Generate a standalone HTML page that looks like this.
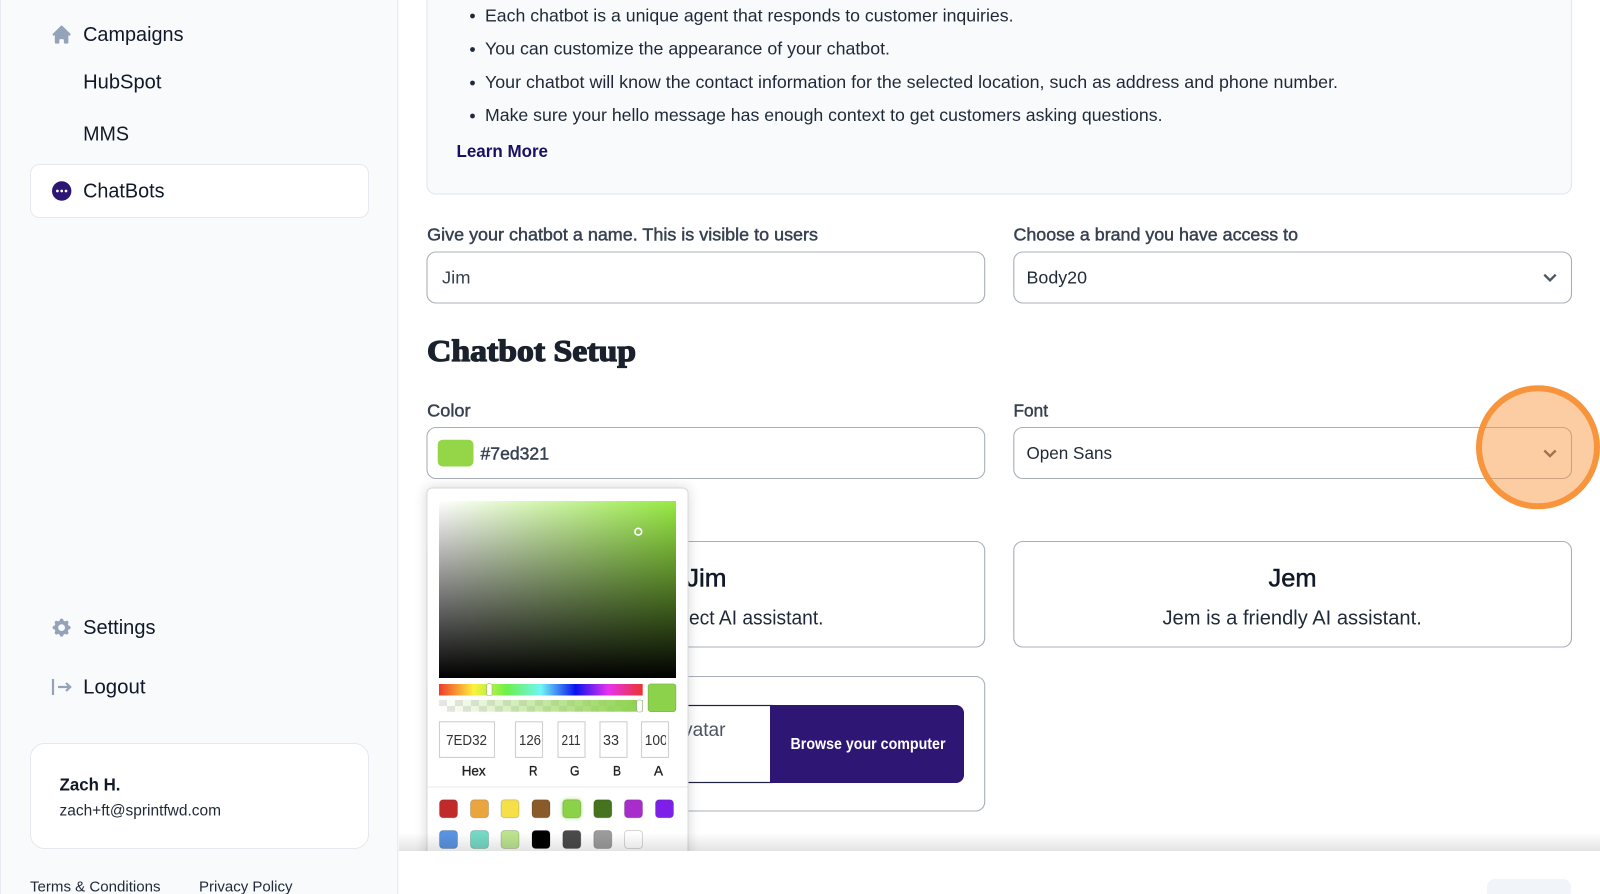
<!DOCTYPE html>
<html lang="en">
<head>
<meta charset="utf-8">
<title>ChatBots</title>
<style>
html,body{margin:0;padding:0;background:#fff;width:1600px;height:894px;overflow:hidden}
svg{display:block;position:absolute;left:0;top:0}
text{font-family:"Liberation Sans",Arial,sans-serif;white-space:pre}
.nav{font-size:20.6px;fill:#111827}
.lab{font-size:17.5px;fill:#374151;stroke:#374151;stroke-width:.45}
.li{font-size:17.5px;fill:#1f2937}
.val{font-size:17.5px;fill:#374151}
.fld{font-size:14.4px;fill:#333}
.pl{font-size:13.8px;fill:#222;stroke:#222;stroke-width:.35}
.box{fill:#fff;stroke:#a9afb9;stroke-width:1.1}
</style>
</head>
<body>
<svg width="1600" height="894" viewBox="0 0 1600 894" xmlns="http://www.w3.org/2000/svg">
<defs>
<linearGradient id="sat" x1="0" x2="1" y1="0" y2="0"><stop offset="0" stop-color="#fff"/><stop offset="1" stop-color="#97ea42"/></linearGradient>
<linearGradient id="val" x1="0" x2="0" y1="0" y2="1"><stop offset="0" stop-color="#000" stop-opacity="0"/><stop offset="1" stop-color="#000"/></linearGradient>
<linearGradient id="hue" x1="0" x2="1" y1="0" y2="0">
<stop offset="0" stop-color="#f03a2a"/><stop offset=".17" stop-color="#fdf13e"/><stop offset=".33" stop-color="#6cf04a"/><stop offset=".5" stop-color="#70f5f5"/><stop offset=".67" stop-color="#0a12ee"/><stop offset=".83" stop-color="#e733ee"/><stop offset="1" stop-color="#ea3330"/></linearGradient>
<linearGradient id="alp" x1="0" x2="1" y1="0" y2="0"><stop offset="0" stop-color="#8cd24a" stop-opacity="0"/><stop offset="1" stop-color="#8cd24a"/></linearGradient>
<pattern id="chk" width="16" height="12" patternUnits="userSpaceOnUse" x="439" y="700"><rect width="16" height="12" fill="#fff"/><rect width="8" height="6" fill="#e6e6e6"/><rect x="8" y="6" width="8" height="6" fill="#e6e6e6"/></pattern>
<linearGradient id="fs" x1="0" x2="0" y1="0" y2="1"><stop offset="0" stop-color="#000" stop-opacity="0"/><stop offset="1" stop-color="#000" stop-opacity=".11"/></linearGradient>
<filter id="ps" x="-15%" y="-15%" width="130%" height="130%"><feDropShadow dx="0" dy="0" stdDeviation="6" flood-color="#000" flood-opacity=".16"/></filter>
<filter id="glow" x="-50%" y="-50%" width="200%" height="200%"><feDropShadow dx="0" dy="0" stdDeviation="2" flood-color="#8cd24a" flood-opacity=".8"/></filter>
<clipPath id="a100"><rect x="642" y="722" width="24" height="35"/></clipPath>
</defs>

<!-- Sidebar -->
<rect x="0" y="0" width="398" height="894" fill="#f8fafc"/>
<rect x="0" y="0" width="1" height="894" fill="#e8ecf2"/>
<rect x="397" y="0" width="1.5" height="894" fill="#e9edf3"/>

<g transform="translate(50.3,23.3) scale(1.13)" fill="#94a3b8"><path d="M10.707 2.293a1 1 0 00-1.414 0l-7 7a1 1 0 001.414 1.414L4 10.414V17a1 1 0 001 1h2a1 1 0 001-1v-2a1 1 0 011-1h2a1 1 0 011 1v2a1 1 0 001 1h2a1 1 0 001-1v-6.586l.293.293a1 1 0 001.414-1.414l-7-7z"/></g>
<text class="nav" x="83.1" y="41" textLength="100.4" lengthAdjust="spacingAndGlyphs">Campaigns</text>
<text class="nav" x="83.1" y="88.5" textLength="78.4" lengthAdjust="spacingAndGlyphs">HubSpot</text>
<text class="nav" x="83.1" y="140.5" textLength="45.9" lengthAdjust="spacingAndGlyphs">MMS</text>

<rect x="30.5" y="164.5" width="338" height="53" rx="9" fill="#fff" stroke="#e5e9ef"/>
<circle cx="61.7" cy="191" r="9.7" fill="#2e1675"/>
<circle cx="57.4" cy="191" r="1.35" fill="#fff"/><circle cx="61.7" cy="191" r="1.35" fill="#fff"/><circle cx="66" cy="191" r="1.35" fill="#fff"/>
<text class="nav" x="83.1" y="197.5" textLength="81.4" lengthAdjust="spacingAndGlyphs">ChatBots</text>

<g transform="translate(50.3,616.3) scale(1.13)" fill="#94a3b8"><path fill-rule="evenodd" d="M11.49 3.17c-.38-1.56-2.6-1.56-2.98 0a1.532 1.532 0 01-2.286.948c-1.372-.836-2.942.734-2.106 2.106.54.886.061 2.042-.947 2.287-1.561.379-1.561 2.6 0 2.978a1.532 1.532 0 01.947 2.287c-.836 1.372.734 2.942 2.106 2.106a1.532 1.532 0 012.287.947c.379 1.561 2.6 1.561 2.978 0a1.533 1.533 0 012.287-.947c1.372.836 2.942-.734 2.106-2.106a1.533 1.533 0 01.947-2.287c1.561-.379 1.561-2.6 0-2.978a1.532 1.532 0 01-.947-2.287c.836-1.372-.734-2.942-2.106-2.106a1.532 1.532 0 01-2.287-.947zM10 13a3 3 0 100-6 3 3 0 000 6z"/></g>
<text class="nav" x="83.1" y="634" textLength="72.4" lengthAdjust="spacingAndGlyphs">Settings</text>
<g fill="none" stroke="#94a3b8"><path d="M53 679v16" stroke-width="2.2"/><path d="M58 687h12M66 683l4.2 4-4.2 4" stroke-width="2.2"/></g>
<text class="nav" x="83.1" y="693.3" textLength="62.4" lengthAdjust="spacingAndGlyphs">Logout</text>

<rect x="30.5" y="743.5" width="338" height="105" rx="14" fill="#fff" stroke="#e5e9ef"/>
<text x="59.5" y="790.3" font-size="17.5" font-weight="700" fill="#111827" textLength="61" lengthAdjust="spacingAndGlyphs">Zach H.</text>
<text x="59.5" y="815.5" font-size="15.4" fill="#1f2937" textLength="161.5" lengthAdjust="spacingAndGlyphs">zach+ft@sprintfwd.com</text>
<text x="30" y="891.5" font-size="14.9" fill="#1f2937" textLength="130.5" lengthAdjust="spacingAndGlyphs">Terms &amp; Conditions</text>
<text x="199" y="891.5" font-size="14.9" fill="#1f2937" textLength="93.5" lengthAdjust="spacingAndGlyphs">Privacy Policy</text>

<!-- Info box -->
<rect x="427" y="-20" width="1144.5" height="214" rx="9" fill="#f8fafc" stroke="#e5e9ef" stroke-width="1.2"/>
<g fill="#1f2937"><circle cx="472.5" cy="16" r="2.4"/><circle cx="472.5" cy="49.5" r="2.4"/><circle cx="472.5" cy="83" r="2.4"/><circle cx="472.5" cy="116" r="2.4"/></g>
<text class="li" x="485" y="21.3" textLength="528.5" lengthAdjust="spacingAndGlyphs">Each chatbot is a unique agent that responds to customer inquiries.</text>
<text class="li" x="485" y="54.6" textLength="405" lengthAdjust="spacingAndGlyphs">You can customize the appearance of your chatbot.</text>
<text class="li" x="485" y="88" textLength="853" lengthAdjust="spacingAndGlyphs">Your chatbot will know the contact information for the selected location, such as address and phone number.</text>
<text class="li" x="485" y="121" textLength="677.5" lengthAdjust="spacingAndGlyphs">Make sure your hello message has enough context to get customers asking questions.</text>
<text x="456.5" y="157" font-size="17.5" font-weight="700" fill="#1c0f63" textLength="91.5" lengthAdjust="spacingAndGlyphs">Learn More</text>

<!-- Name / brand -->
<text class="lab" x="427.2" y="240.5" textLength="390.8" lengthAdjust="spacingAndGlyphs">Give your chatbot a name. This is visible to users</text>
<text class="lab" x="1013.5" y="240.5" textLength="284.5" lengthAdjust="spacingAndGlyphs">Choose a brand you have access to</text>
<rect class="box" x="427" y="252" width="557.7" height="51" rx="9"/>
<rect class="box" x="1013.8" y="252" width="557.7" height="51" rx="9"/>
<text class="val" x="442" y="283.5" textLength="28.5" lengthAdjust="spacingAndGlyphs">Jim</text>
<text class="val" style="fill:#1f2937" x="1026.5" y="283.5" textLength="60.5" lengthAdjust="spacingAndGlyphs">Body20</text>
<path d="M1544.3 274.7l5.7 5.6 5.7-5.6" fill="none" stroke="#4b5563" stroke-width="2.4"/>

<!-- Setup -->
<text x="427" y="361" style="font-family:'Liberation Serif',serif" font-size="31" font-weight="700" fill="#1a202c" stroke="#1a202c" stroke-width="1.3" textLength="209" lengthAdjust="spacingAndGlyphs">Chatbot Setup</text>

<text class="lab" x="427.2" y="416.5" textLength="43.3" lengthAdjust="spacingAndGlyphs">Color</text>
<text class="lab" x="1013.5" y="416.5" textLength="34.5" lengthAdjust="spacingAndGlyphs">Font</text>
<rect class="box" x="427" y="427.5" width="557.7" height="51" rx="9"/>
<rect class="box" x="1013.8" y="427.5" width="557.7" height="51" rx="9"/>
<rect x="437.7" y="439.7" width="35.8" height="26.8" rx="5" fill="#95d548"/>
<text class="lab" x="480.5" y="459.3" textLength="68.5" lengthAdjust="spacingAndGlyphs">#7ed321</text>
<text class="val" style="fill:#1f2937" x="1026.5" y="459" textLength="85.5" lengthAdjust="spacingAndGlyphs">Open Sans</text>
<path d="M1544.3 450.5l5.7 5.6 5.7-5.6" fill="none" stroke="#4b5563" stroke-width="2.4"/>

<!-- Personas -->
<rect class="box" x="427" y="541.5" width="557.7" height="105.5" rx="9"/>
<rect class="box" x="1013.8" y="541.5" width="557.7" height="105.5" rx="9"/>
<text x="686" y="586.3" font-size="24.7" fill="#111827" stroke="#111827" stroke-width=".5" textLength="40.5" lengthAdjust="spacingAndGlyphs">Jim</text>
<text x="689" y="624.5" font-size="20" fill="#1f2937" textLength="134.5" lengthAdjust="spacingAndGlyphs">ect AI assistant.</text>
<text x="1268.5" y="586.3" font-size="24.7" fill="#111827" stroke="#111827" stroke-width=".5" textLength="48" lengthAdjust="spacingAndGlyphs">Jem</text>
<text x="1162.5" y="624.5" font-size="20" fill="#1f2937" textLength="259.3" lengthAdjust="spacingAndGlyphs">Jem is a friendly AI assistant.</text>

<!-- Upload -->
<rect class="box" x="427" y="676.5" width="557.7" height="134.5" rx="9"/>
<rect x="460" y="705.5" width="312" height="77" fill="#fff" stroke="#1f2140" stroke-width="1.2"/>
<path d="M770 705h186a8 8 0 018 8v62a8 8 0 01-8 8h-186z" fill="#2e1675"/>
<text x="580" y="736" font-size="19.5" fill="#4b5563" textLength="145.5" lengthAdjust="spacingAndGlyphs">Upload an avatar</text>
<text x="790.5" y="749" font-size="15.4" font-weight="700" fill="#fff" textLength="155" lengthAdjust="spacingAndGlyphs">Browse your computer</text>

<!-- Colour picker -->
<rect x="427" y="488" width="261" height="380" rx="5" fill="#fff" stroke="#d6d8dc" filter="url(#ps)"/>
<rect x="439" y="501" width="237" height="177" fill="url(#sat)"/>
<rect x="439" y="501" width="237" height="177" fill="url(#val)"/>
<circle cx="638.3" cy="531.7" r="3.4" fill="none" stroke="#fff" stroke-width="1.6"/>
<rect x="439" y="684" width="203.7" height="11.5" fill="url(#hue)"/>
<rect x="486.8" y="683.7" width="5.2" height="12" rx="1.5" fill="#fff" stroke="#9a9a9a" stroke-width=".5"/>
<rect x="439" y="700" width="203.7" height="11.7" fill="url(#chk)"/>
<rect x="439" y="700" width="203.7" height="11.7" fill="url(#alp)"/>
<rect x="636.8" y="700" width="5.4" height="12" rx="1.5" fill="#fff" stroke="#9a9a9a" stroke-width=".5"/>
<rect x="648.2" y="684" width="27.6" height="27.6" rx="2.5" fill="#8cd24a" stroke="#7eb848" stroke-width=".8"/>

<g fill="#fff" stroke="#cfcfcf" stroke-width="1.1">
<rect x="439.5" y="721.8" width="55" height="35.6"/>
<rect x="515.5" y="721.8" width="27" height="35.6"/>
<rect x="558" y="721.8" width="27" height="35.6"/>
<rect x="600" y="721.8" width="27" height="35.6"/>
<rect x="641.5" y="721.8" width="27" height="35.6"/>
</g>
<text class="fld" x="446" y="745" textLength="41" lengthAdjust="spacingAndGlyphs">7ED32</text>
<text class="fld" x="519" y="745" textLength="22" lengthAdjust="spacingAndGlyphs">126</text>
<text class="fld" x="561.5" y="745" textLength="19" lengthAdjust="spacingAndGlyphs">211</text>
<text class="fld" x="603" y="745" textLength="16" lengthAdjust="spacingAndGlyphs">33</text>
<text class="fld" x="644.7" y="745" textLength="23" lengthAdjust="spacingAndGlyphs" clip-path="url(#a100)">100</text>
<text class="pl" x="461.7" y="775.7" textLength="24" lengthAdjust="spacingAndGlyphs">Hex</text>
<text class="pl" x="529" y="775.7" textLength="8.5" lengthAdjust="spacingAndGlyphs">R</text>
<text class="pl" x="570" y="775.7" textLength="9.5" lengthAdjust="spacingAndGlyphs">G</text>
<text class="pl" x="613" y="775.7" textLength="8" lengthAdjust="spacingAndGlyphs">B</text>
<text class="pl" x="654" y="775.7" textLength="9" lengthAdjust="spacingAndGlyphs">A</text>
<rect x="427.5" y="786.5" width="260" height="1" fill="#e9e9e9"/>

<g stroke="#000" stroke-opacity=".16" stroke-width="1">
<rect x="439.5" y="799.8" width="18" height="18" rx="3.5" fill="#c02a2a"/>
<rect x="470.5" y="799.8" width="18" height="18" rx="3.5" fill="#eba53f"/>
<rect x="501" y="799.8" width="18" height="18" rx="3.5" fill="#f6e04a"/>
<rect x="532" y="799.8" width="18" height="18" rx="3.5" fill="#8b5a2b"/>
<rect x="562.8" y="799.8" width="18" height="18" rx="3.5" fill="#8cd24a" filter="url(#glow)"/>
<rect x="593.8" y="799.8" width="18" height="18" rx="3.5" fill="#45731e"/>
<rect x="624.5" y="799.8" width="18" height="18" rx="3.5" fill="#a82dcc"/>
<rect x="655.5" y="799.8" width="18" height="18" rx="3.5" fill="#7d1fe8"/>
<rect x="439.5" y="830.5" width="18" height="18" rx="3.5" fill="#5a93e0"/>
<rect x="470.5" y="830.5" width="18" height="18" rx="3.5" fill="#74d9c5"/>
<rect x="501" y="830.5" width="18" height="18" rx="3.5" fill="#bce38f"/>
<rect x="532" y="830.5" width="18" height="18" rx="3.5" fill="#000"/>
<rect x="562.8" y="830.5" width="18" height="18" rx="3.5" fill="#4a4a4a"/>
<rect x="593.8" y="830.5" width="18" height="18" rx="3.5" fill="#9b9b9b"/>
<rect x="624.5" y="830.5" width="18" height="18" rx="3.5" fill="#fff"/>
</g>

<!-- Footer -->
<rect x="399" y="833" width="1201" height="18" fill="url(#fs)"/>
<rect x="399" y="851" width="1201" height="43" fill="#fff"/>
<rect x="1487" y="879" width="84" height="30" rx="8" fill="#f1f4f9"/>

<!-- Highlight -->
<circle cx="1538" cy="447.3" r="59" fill="#f9943c" fill-opacity=".47" stroke="#f7943c" stroke-width="6"/>
</svg>
</body>
</html>
